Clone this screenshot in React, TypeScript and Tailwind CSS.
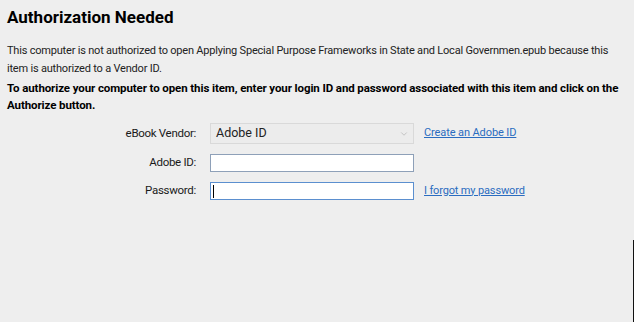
import { ChevronDown } from "lucide-react";

const font = { fontFamily: 'Roboto, "Noto Sans", sans-serif' };

function Label({ children }: { children: React.ReactNode }) {
  return <div className="w-[196px] text-right text-[11.5px] tracking-[-0.3px] text-[#1a1a1a]">{children}</div>;
}

export default function App() {
  return (
    <div className="relative w-[634px] h-[322px] bg-[#eeeeee] overflow-hidden text-[#111]" style={font}>
      <div className="absolute right-0 top-[240px] bottom-0 w-[1px] bg-[#111]" />
      <div className="px-[7px] pt-[5px]">
        <h1 className="text-[17px] font-bold leading-[24px] tracking-[0px] text-black">Authorization Needed</h1>
        <p className="mt-[13px] text-[11px] leading-[18px] tracking-[-0.2px] text-[#222] whitespace-nowrap">
          This computer is not authorized to open Applying Special Purpose Frameworks in State and Local Governmen.epub because this
          <br />
          item is authorized to a Vendor ID.
        </p>
        <p className="mt-[2px] text-[11.5px] leading-[17px] tracking-[-0.1px] font-bold text-black whitespace-nowrap">
          To authorize your computer to open this item, enter your login ID and password associated with this item and click on the
          <br />
          Authorize button.
        </p>
      </div>

      <div className="mt-[9px] flex flex-col">
        <div className="flex items-center h-[21px]">
          <Label>eBook Vendor:</Label>
          <div className="ml-[14px] w-[204px] h-[21px] border border-[#d9d9d9] bg-[#ececec] flex items-center justify-between pl-[5px] pr-[4px]">
            <span className="text-[12.5px] text-[#222]">Adobe ID</span>
            <ChevronDown size={10} strokeWidth={1.5} className="text-[#aaa]" />
          </div>
          <a className="ml-[10px] text-[11px] tracking-[-0.1px] text-[#2a6cc0] underline">Create an Adobe ID</a>
        </div>
        <div className="flex items-center h-[18px] mt-[10px]">
          <Label>Adobe ID:</Label>
          <div className="ml-[14px] w-[204px] h-[18px] border border-[#8ea0b8] bg-white" />
        </div>
        <div className="flex items-center h-[18px] mt-[10px]">
          <Label>Password:</Label>
          <div className="ml-[14px] w-[204px] h-[18px] border border-[#5b8fcf] bg-white flex items-center pl-[2px]">
            <div className="w-[1px] h-[13px] bg-black" />
          </div>
          <a className="ml-[10px] text-[11px] tracking-[-0.15px] text-[#2a6cc0] underline">I forgot my password</a>
        </div>
      </div>
    </div>
  );
}
